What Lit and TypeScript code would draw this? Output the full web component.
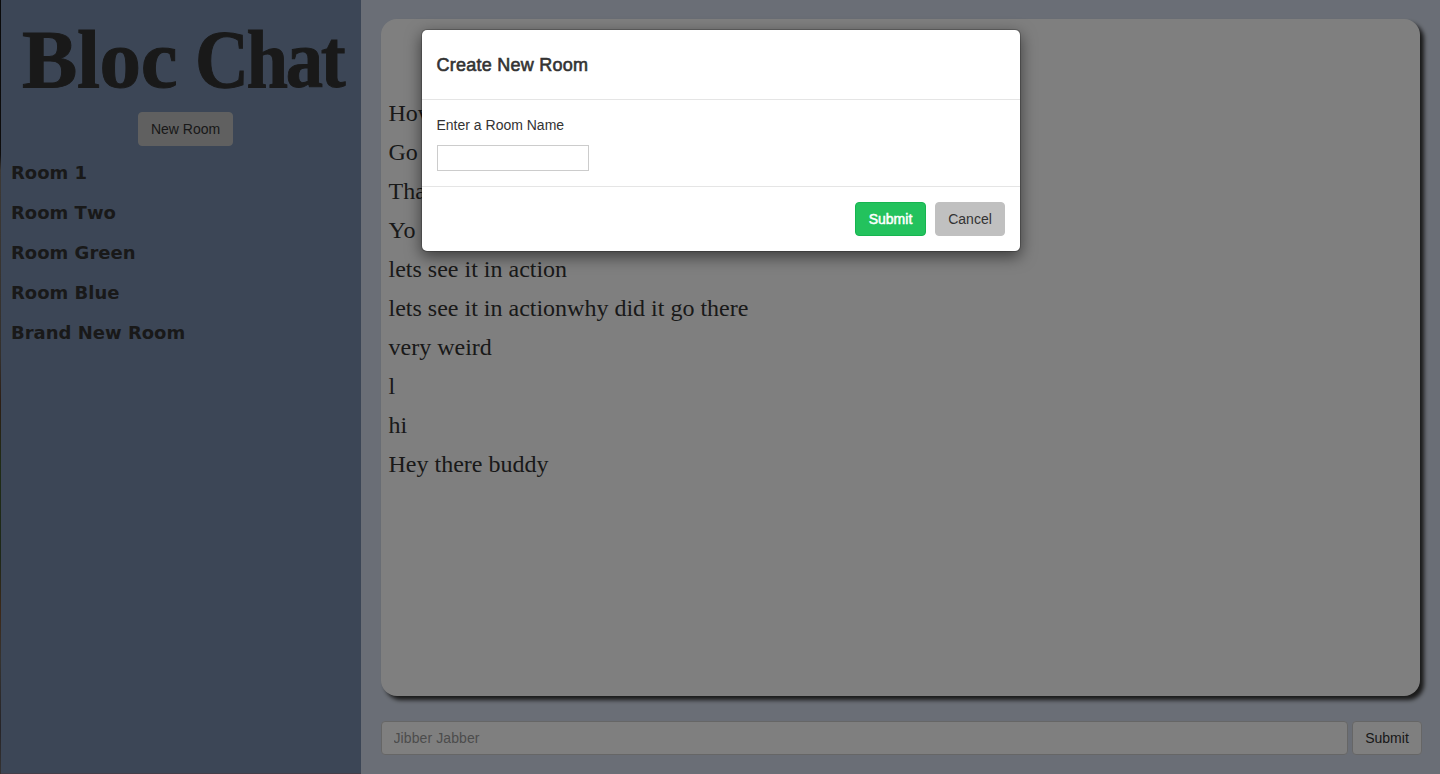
import { LitElement, html, css } from "lit";
import { customElement, state } from "lit/decorators.js";

@customElement("app-root")
export class AppRoot extends LitElement {
  @state() rooms = ["Room 1", "Room Two", "Room Green", "Room Blue", "Brand New Room"];
  @state() messages = [
    "How",
    "Go",
    "That",
    "Yo",
    "lets see it in action",
    "lets see it in actionwhy did it go there",
    "very weird",
    "l",
    "hi",
    "Hey there buddy",
  ];

  static styles = css`
    :host {
      display: block;
      position: relative;
      height: 774px;
      overflow: hidden;
      font: 14px/20px "Liberation Sans", Arial, sans-serif;
      color: #333;
    }
    * { box-sizing: border-box; }
    .page {
      display: grid;
      grid-template-columns: 1px 360px 1fr;
      height: 100%;
    }
    .edge {
      background: linear-gradient(#141414, #1c1a1a 20%, #78726c 22%, #66605a 46%, #5a3c28 52%, #40582c 60%, #3c5030 72%, #7a5030 79%, #6a6660 85%, #4c4850 94%, #6a6664);
    }
    .side {
      background: #788dad;
      border-bottom: 1px solid #877d92;
      padding-left: 10px;
    }
    .brand {
      display: flex;
      margin: 0;
      padding: 13px 0 0 11px;
      height: 112px;
      font: bold 83px/92px "Liberation Serif", serif;
      white-space: nowrap;
      -webkit-text-stroke: 1px #333;
    }
    .word { display: block; transform-origin: 0 50%; }
    .first { width: 173px; letter-spacing: -0.4px; }
    .second { letter-spacing: -2.6px; transform: scaleX(0.9); }
    .btn {
      display: inline-flex;
      align-items: center;
      justify-content: center;
      height: 34px;
      padding: 0;
      border: 1px solid #c0c0c0;
      border-radius: 4px;
      background: #c0c0c0;
      color: #333;
      font: inherit;
    }
    .new { display: flex; width: 95px; margin-left: 127px; }
    .rooms {
      margin: 7px 0 0;
      padding: 0;
      list-style: none;
      font: bold 18px/40px "DejaVu Sans", Verdana, sans-serif;
      font-kerning: none;
    }
    .main {
      display: flex;
      flex-direction: column;
      background: #d5ddec;
      padding: 19px 18px 0 20px;
    }
    .log {
      height: 677px;
      width: 1039px;
      padding: 75px 7.5px 0;
      border-radius: 16px;
      background: #fff;
      box-shadow: 4px 4px 4px #333;
      font: 24px/39px "Liberation Serif", serif;
    }
    .compose { display: flex; gap: 4px; margin-top: 25px; }
    .entry {
      width: 967px;
      height: 34px;
      padding: 0 11.5px;
      border: 1px solid #ccc;
      border-radius: 4px;
      background: #fff;
      font: inherit;
    }
    .entry::placeholder { color: #999; opacity: 1; letter-spacing: 0.1px; }
    .send { width: 70px; border-color: #ccc; background: #fff; }
    .overlay {
      position: absolute;
      inset: 0;
      background: rgba(0, 0, 0, 0.5);
      padding: 29px 0 0 421px;
    }
    .modal {
      width: 600px;
      height: 223px;
      border: 1px solid rgba(0, 0, 0, 0.2);
      border-radius: 6px;
      background: #fff;
      background-clip: padding-box;
      box-shadow: 0 5px 15px rgba(0, 0, 0, 0.5);
    }
    .head {
      height: 70px;
      padding: 25px 14.5px 0;
      border-bottom: 1px solid #e5e5e5;
    }
    .title {
      margin: 0;
      font-size: 18px;
      font-weight: 400;
      line-height: 20px;
      letter-spacing: 0.25px;
      -webkit-text-stroke: 0.6px #333;
    }
    .body { height: 86px; padding: 15px; }
    .body label { display: block; margin: 0 0 10px -0.5px; }
    .name {
      display: block;
      width: 152px;
      height: 26px;
      border: 1px solid #ccc;
      background: #fff;
    }
    .foot {
      display: flex;
      justify-content: flex-end;
      gap: 9px;
      padding: 15px;
      border-top: 1px solid #e5e5e5;
    }
    .ok {
      width: 71px;
      border-color: #16b550;
      background: #23c25d;
      color: #fff;
      -webkit-text-stroke: 0.5px #fff;
    }
    .cancel { width: 70px; }
  `;

  render() {
    return html`
      <div class="page">
        <div class="edge"></div>
        <aside class="side">
          <h1 class="brand"><span class="word first">Bloc </span><span class="word second">Chat</span></h1>
          <button class="btn new">New Room</button>
          <ul class="rooms">${this.rooms.map((r) => html`<li>${r}</li>`)}</ul>
        </aside>
        <main class="main">
          <section class="log">${this.messages.map((m) => html`<div>${m}</div>`)}</section>
          <form class="compose">
            <input class="entry" placeholder="Jibber Jabber" />
            <button class="btn send" type="button">Submit</button>
          </form>
        </main>
      </div>
      <div class="overlay">
        <div class="modal">
          <div class="head"><h4 class="title">Create New Room</h4></div>
          <div class="body">
            <label for="name">Enter a Room Name</label>
            <input id="name" class="name" />
          </div>
          <div class="foot">
            <button class="btn ok">Submit</button>
            <button class="btn cancel">Cancel</button>
          </div>
        </div>
      </div>
    `;
  }
}
